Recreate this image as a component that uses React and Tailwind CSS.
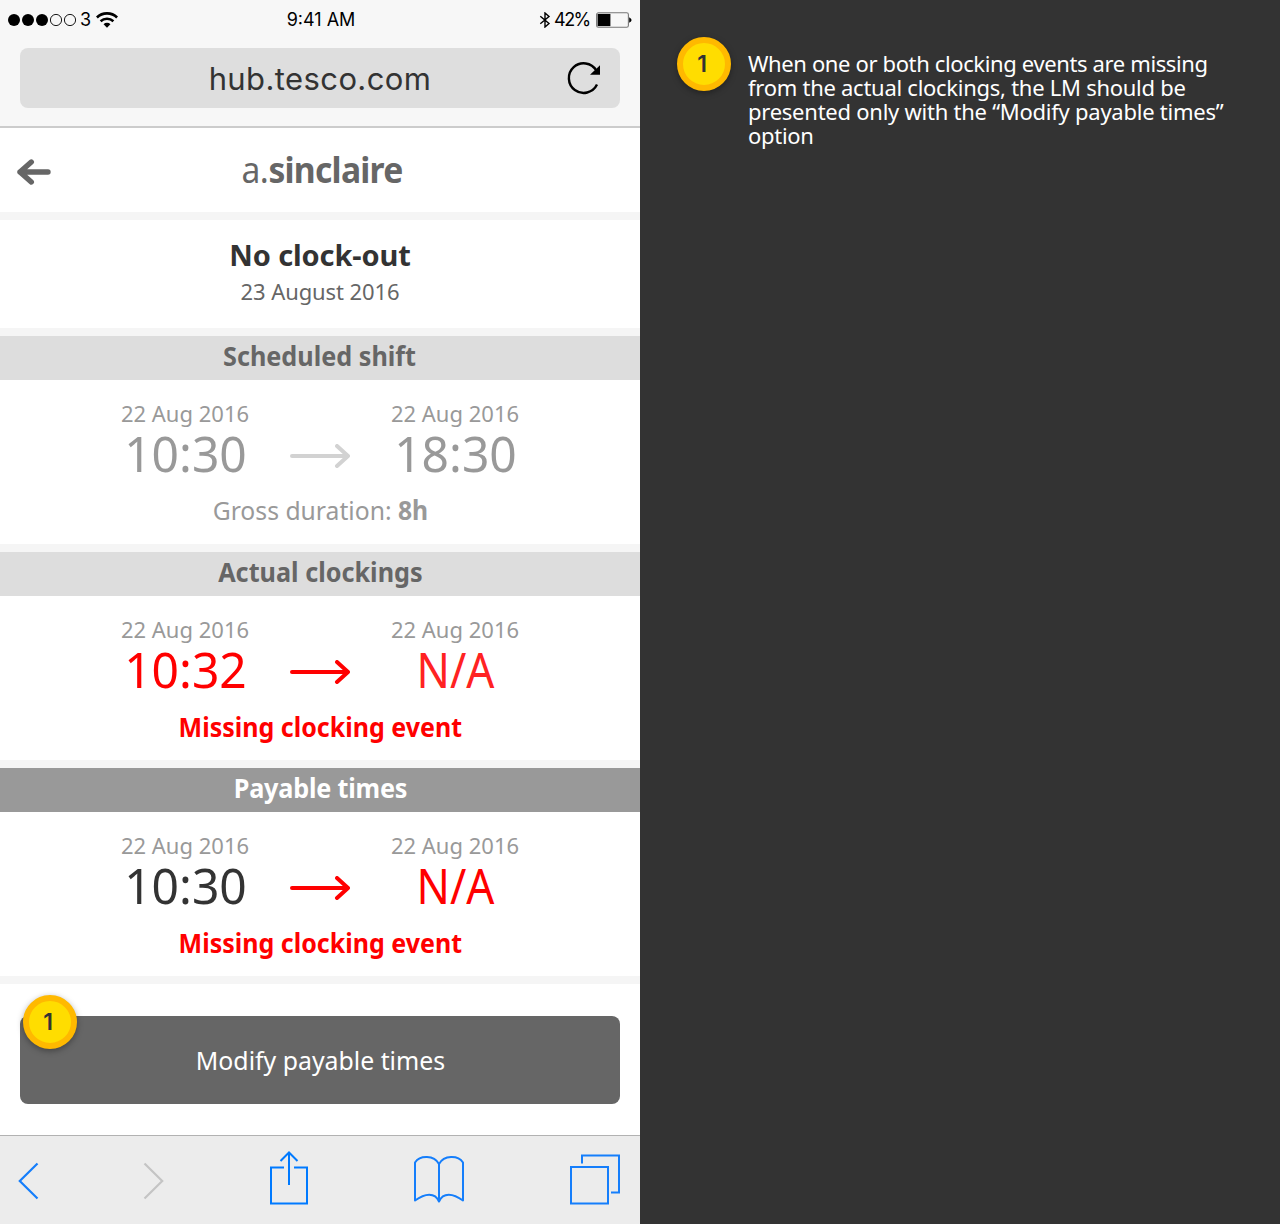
function StatusBar() {
  return (
    <div className="grid h-10 grid-cols-3 items-center px-2 font-[Inter] text-[18px] leading-6 text-black">
      <div className="flex items-center">
        <svg width="70" height="14" viewBox="0 0 70 14">
          <circle cx="6" cy="7" r="6" />
          <circle cx="20" cy="7" r="6" />
          <circle cx="34" cy="7" r="6" />
          <circle cx="48" cy="7" r="5.6" fill="none" stroke="#000" strokeWidth="0.9" />
          <circle cx="62" cy="7" r="5.6" fill="none" stroke="#000" strokeWidth="0.9" />
        </svg>
        <span className="w-[18px] pl-0.5">3</span>
        <svg width="22" height="16" viewBox="0 0 23 16" fill="none" stroke="#000">
          <path d="M0.9 5.4A15.3 15.3 0 0 1 22.1 5.4" strokeWidth="2.9" />
          <path d="M4.8 9.3A9.8 9.8 0 0 1 18.2 9.3" strokeWidth="2.6" />
          <path d="M7.9 12.4A5.2 5.2 0 0 1 15.1 12.4L11.5 16Z" fill="#000" stroke="none" />
        </svg>
      </div>
      <div className="pl-0.5 text-center">9:41 AM</div>
      <div className="flex items-center justify-end">
        <svg width="12" height="16" viewBox="0 0 12 16" fill="none" stroke="#000" strokeWidth="1.4">
          <path d="M1.3 4.3L10 11.5L6 15V1L10 4.5L1.3 11.7" />
        </svg>
        <span className="w-[45px] pl-[3px] tracking-[-1.5px]">42%</span>
        <svg width="36" height="16" viewBox="0 0 36 16">
          <rect x="0.6" y="0.8" width="31.8" height="14.4" rx="1.8" fill="none" stroke="#777" strokeWidth="1.1" />
          <rect x="1.6" y="1.9" width="12.8" height="12.2" />
          <path d="M33.2 5.2Q35.6 6.6 35.6 8T33.2 10.8Z" />
        </svg>
      </div>
    </div>
  );
}

function AddressBar() {
  return (
    <div className="mx-5 mt-2 grid h-[60px] grid-cols-[60px_1fr_60px] items-center rounded-lg bg-[#dedede]">
      <span />
      <span className="mt-0.5 text-center font-[Inter] text-[31px] leading-10 tracking-[0.4px] text-[#333]">hub.tesco.com</span>
      <svg className="ml-[7px]" width="36" height="36" viewBox="0 0 36 36">
        <path d="M30 24.6A14.8 14.8 0 1 1 29.3 10.4" fill="none" stroke="#000" strokeWidth="2.4" />
        <path d="M33 5.2V14.8H23Z" />
      </svg>
    </div>
  );
}

function Marker() {
  return (
    <div className="flex size-[54px] items-center justify-center rounded-full border-6 border-[#ffb900] bg-[#ffdd00] pr-1 font-[Inter] text-[23px] leading-none font-semibold text-[#333] shadow-[0_2px_6px_rgba(0,0,0,0.35)]">
      1
    </div>
  );
}

function Arrow({ className }) {
  return (
    <svg className={className} width="60" height="24" viewBox="0 0 60 24" fill="none" stroke="currentColor" strokeWidth="4" strokeLinecap="round" strokeLinejoin="round">
      <path d="M2 12H58M47 2L58 12L47 22" />
    </svg>
  );
}

function Section({ title, titleClass, start, startClass, end, endClass, arrowClass, children }) {
  return (
    <section className="h-[216px] border-b-8 border-[#f5f5f5]">
      <h2 className={`h-11 text-center text-[26px] leading-[41px] font-bold ${titleClass}`}>
        <span className="inline-block scale-x-[0.97]">{title}</span>
      </h2>
      <div className="grid grid-cols-[150px_120px_150px] justify-center pt-[21px] text-center">
        <div>
          <div className="text-[22px] leading-6 text-[#999]">22 Aug 2016</div>
          <div className={`pl-px text-[50px] leading-14 ${startClass}`}>{start}</div>
        </div>
        <Arrow className={`mt-[43px] justify-self-center ${arrowClass}`} />
        <div>
          <div className="text-[22px] leading-6 text-[#999]">22 Aug 2016</div>
          <div className={`pl-px text-[50px] leading-14 ${endClass}`}>{end}</div>
        </div>
      </div>
      <div className="mt-[13px] text-center text-[26px] leading-8">{children}</div>
    </section>
  );
}

function Missing() {
  return <span className="inline-block scale-x-[0.962] pt-px font-bold text-[#ff0000]">Missing clocking event</span>;
}

function Toolbar() {
  return (
    <div className="flex h-[89px] items-center justify-between border-t border-[#b2b2b2] bg-[#ececec] pr-5 pb-0.5 pl-[18px]">
      <svg className="mt-[3px]" width="21" height="38" viewBox="0 0 21 38" fill="none" stroke="#157efb" strokeWidth="2.2">
        <path d="M19.5 1.5L1.8 19L19.5 36.5" />
      </svg>
      <svg className="mt-[3px] ml-[-2px]" width="21" height="38" viewBox="0 0 21 38" fill="none" stroke="#c4c4c4" strokeWidth="2.2">
        <path d="M1.5 1.5L19.2 19L1.5 36.5" />
      </svg>
      <svg className="mt-[-3px]" width="38" height="54" viewBox="0 0 38 54" fill="none" stroke="#007aff" strokeWidth="2">
        <path d="M14 16.5H1V52.5H37V16.5H24M19 34V1.5M10.5 10L19 1.5L27.5 10" />
      </svg>
      <svg className="mt-[1px]" width="50" height="49" viewBox="0 0 50 49" fill="none" stroke="#157efb" strokeWidth="2" strokeLinejoin="round">
        <path d="M25 9C20 0 6 0 1 7.5V45.5C11 38 21 37 25 46.5C29 37 39 38 49 45.5V7.5C44 0 30 0 25 9V46.5" />
      </svg>
      <svg className="mt-[1px]" width="50" height="51" viewBox="0 0 50 51" fill="none" stroke="#157efb" strokeWidth="2">
        <path d="M1 13H38V49.5H1ZM12 9.5V1.5H49V38.5H41" />
      </svg>
    </div>
  );
}

export default function App() {
  return (
    <div className="flex h-[1224px] w-[1280px] overflow-hidden bg-[#333] font-['Noto_Sans',sans-serif] whitespace-nowrap">
      <main className="flex w-[640px] flex-col bg-white">
        <header className="h-32 border-b-2 border-[#ccc] bg-[#f7f7f7]">
          <StatusBar />
          <AddressBar />
        </header>

        <div className="grid h-[92px] grid-cols-[80px_1fr_80px] items-center border-b-8 border-[#f5f5f5] text-[#666]">
          <svg className="mt-1 ml-[17px]" width="34" height="26" viewBox="0 0 34 26" fill="none" stroke="currentColor" strokeWidth="5.4" strokeLinecap="round" strokeLinejoin="round">
            <path d="M31 13H3M14.3 3L3 13L14.3 23" />
          </svg>
          <div className="ml-1 scale-x-[0.935] text-center text-[36px] leading-10">
            <span className="tracking-[-0.5px]">a.</span>
            <span className="font-bold tracking-[-0.8px]">sinclaire</span>
          </div>
        </div>

        <div className="h-[116px] border-b-8 border-[#f5f5f5] pt-[15px] text-center">
          <h1 className="text-[29px] leading-10 font-bold tracking-[-0.1px] text-[#333]">No clock-out</h1>
          <p className="text-[22px] leading-8 tracking-[-0.1px] text-[#666]">23 August 2016</p>
        </div>

        <Section title="Scheduled shift" titleClass="bg-[#ddd] text-[#666]" start="10:30" startClass="text-[#999] scale-x-[0.96]" end="18:30" endClass="text-[#999] scale-x-[0.96]" arrowClass="text-[#d2d2d2]">
          <span className="inline-block scale-x-[0.95] text-[#999]">Gross duration: <b>8h</b></span>
        </Section>
        <Section title="Actual clockings" titleClass="bg-[#ddd] text-[#666]" start="10:32" startClass="text-[#ff0000] scale-x-[0.96]" end="N/A" endClass="text-[#ff2222] scale-x-[0.88]" arrowClass="text-[#ff0000]">
          <Missing />
        </Section>
        <Section title="Payable times" titleClass="bg-[#999] text-white tracking-[-0.2px]" start="10:30" startClass="text-[#333] scale-x-[0.96]" end="N/A" endClass="text-[#ff0000] scale-x-[0.88]" arrowClass="text-[#ff0000]">
          <Missing />
        </Section>

        <div className="h-[151px] px-5 pt-8">
          <div className="relative">
            <button className="h-[88px] w-full rounded-lg bg-[#666] text-[26px] text-white">
              <span className="inline-block scale-x-[0.955] pl-0.5">Modify payable times</span>
            </button>
            <div className="absolute top-[-21px] left-[3px]">
              <Marker />
            </div>
          </div>
        </div>

        <Toolbar />
      </main>

      <aside className="flex items-start gap-[17px] pt-[37px] pl-[37px]">
        <Marker />
        <p className="mt-[14px] text-[22px] leading-6 text-white">
          <span className="block tracking-[-0.37px]">When one or both clocking events are missing</span>
          <span className="block tracking-[-0.27px]">from the actual clockings, the LM should be</span>
          <span className="block tracking-[-0.25px]">presented only with the “Modify payable times”</span>
          <span className="block tracking-[-0.3px]">option</span>
        </p>
      </aside>
    </div>
  );
}
